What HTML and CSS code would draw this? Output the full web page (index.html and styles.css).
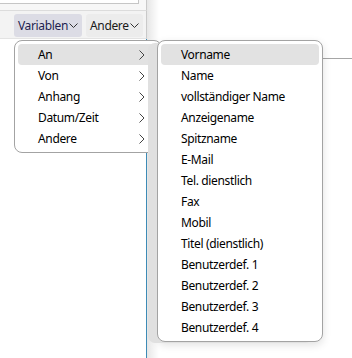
FILE: index.html
```html
<html>
<head>
    <title>Variablen</title>
    <link rel="stylesheet" href="styles.css">
</head>
<body>
    <div class="app">
        <div class="left">
            <div class="field-strip"><div class="field"></div></div>
            <div class="toolbar">
                <button class="tb-btn active">Variablen<svg width="9" height="6" viewBox="0 0 9 6"><polyline points="0.5,0.5 4.5,4.5 8.5,0.5" /></svg></button>
                <button class="tb-btn">Andere<svg width="9" height="6" viewBox="0 0 9 6"><polyline points="0.5,0.5 4.5,4.5 8.5,0.5" /></svg></button>
            </div>
            <div class="left-body"></div>
        </div>
        <div class="right">
            <div class="right-head"></div>
        </div>

        <!-- first level menu -->
        <ul class="menu menu-main">
            <li class="selected">An<svg width="6" height="10" viewBox="0 0 6 10"><polyline points="0.5,0.5 5,5 0.5,9.5" /></svg></li>
            <li>Von<svg width="6" height="10" viewBox="0 0 6 10"><polyline points="0.5,0.5 5,5 0.5,9.5" /></svg></li>
            <li>Anhang<svg width="6" height="10" viewBox="0 0 6 10"><polyline points="0.5,0.5 5,5 0.5,9.5" /></svg></li>
            <li>Datum/Zeit<svg width="6" height="10" viewBox="0 0 6 10"><polyline points="0.5,0.5 5,5 0.5,9.5" /></svg></li>
            <li>Andere<svg width="6" height="10" viewBox="0 0 6 10"><polyline points="0.5,0.5 5,5 0.5,9.5" /></svg></li>
        </ul>

        <!-- submenu for "An" -->
        <ul class="menu menu-sub">
            <li class="selected">Vorname</li>
            <li>Name</li>
            <li>vollständiger Name</li>
            <li>Anzeigename</li>
            <li>Spitzname</li>
            <li>E-Mail</li>
            <li>Tel. dienstlich</li>
            <li>Fax</li>
            <li>Mobil</li>
            <li>Titel (dienstlich)</li>
            <li>Benutzerdef. 1</li>
            <li>Benutzerdef. 2</li>
            <li>Benutzerdef. 3</li>
            <li>Benutzerdef. 4</li>
        </ul>
    </div>
</body>
</html>
```

FILE: styles.css
```css
body {
    margin: 0;
    padding: 0;
    background-color: #fff;
    font-family: "Noto Sans", Arial, sans-serif;
    font-size: 12px;
    letter-spacing: -0.35px;
    color: #000;
    overflow: hidden;
}

.app {
    position: relative;
    display: flex;
    width: 352px;
    height: 358px;
}

.left {
    display: flex;
    flex-direction: column;
    width: 147px;
}

.field-strip {
    height: 10px;
    background-color: #f7f7f7;
    border-bottom: 1px solid #dcdcdc;
    border-right: 1px solid #c9c9c9;
}

.field {
    width: 138px;
    height: 3px;
    background-color: #fff;
    border-bottom: 1px solid #c6c6c6;
    border-right: 1px solid #c6c6c6;
}

.toolbar {
    display: flex;
    gap: 4px;
    height: 23px;
    padding: 3px 0 1px 14px;
    background-color: #f3f3f3;
    border-bottom: 1px solid #e3e3e3;
    border-right: 1px solid #c9c9c9;
}

.tb-btn {
    display: flex;
    align-items: center;
    gap: 1px;
    height: 23px;
    padding: 0 4px;
    border: none;
    border-radius: 3px;
    background-color: #ececec;
    font-family: inherit;
    font-size: 12px;
    letter-spacing: -0.35px;
    color: #1a1a1a;
}

.tb-btn.active {
    background-color: #dcdce5;
    color: #1e1e50;
}

.tb-btn svg polyline {
    fill: none;
    stroke: #333;
    stroke-width: 1;
}

.left-body {
    flex: 1;
    border-right: 1px solid #3d8bb6;
}

.right {
    flex: 1;
    background: linear-gradient(to right, #e6e6e6 0px, #f3f3f3 6px, #fff 12px);
}

.right-head {
    height: 58px;
    border-bottom: 1px solid #a6a6a6;
}

.menu {
    position: absolute;
    top: 40px;
    margin: 0;
    padding: 3px 0;
    list-style: none;
    background-color: #fff;
    border: 1px solid #a3a3a3;
    border-radius: 8px;
}

.menu li {
    display: flex;
    align-items: center;
    justify-content: space-between;
    height: 21px;
    margin: 0 3px;
    padding: 0 0 0 20px;
    border-radius: 4px;
}

.menu li.selected {
    background-color: #e2e2e2;
}

.menu li svg polyline {
    fill: none;
    stroke: #444;
    stroke-width: 1;
}

.menu-main {
    left: 14px;
    width: 146px;
    z-index: 1;
}

.menu-main li {
    padding-right: 13px;
}

.menu-sub {
    left: 157px;
    width: 164px;
    z-index: 2;
    box-shadow: -10px 2px 0 -1px #e0e0e0, 0 3px 8px rgba(0, 0, 0, 0.12);
}
```
